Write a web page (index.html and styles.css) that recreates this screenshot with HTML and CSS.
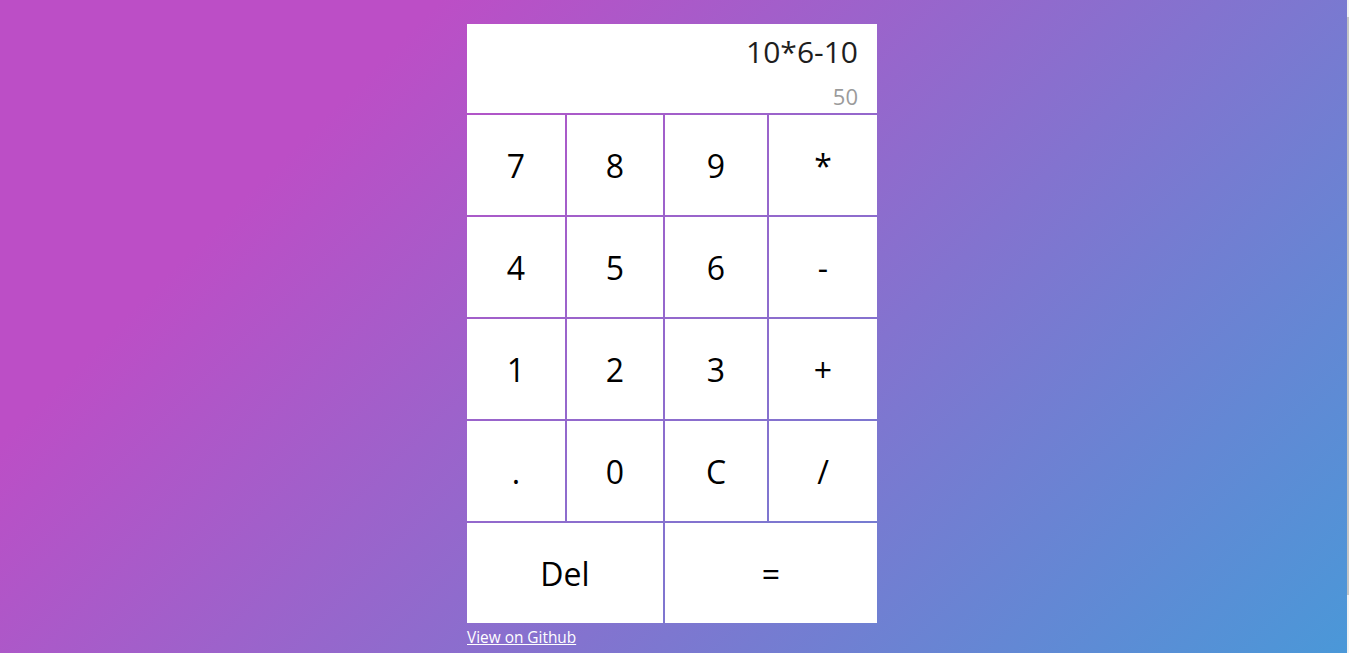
FILE: index.html
```html
<!DOCTYPE html>
<html lang="en">
<head>
<meta charset="utf-8">
<title>Calculator</title>
<link rel="stylesheet" href="styles.css">
</head>
<body>
<div class="page">
  <div class="calculator">
    <div class="output">
      <div class="previous-operand">10*6-10</div>
      <div class="current-operand">50</div>
    </div>
    <button class="key">7</button>
    <button class="key">8</button>
    <button class="key">9</button>
    <button class="key">*</button>
    <button class="key">4</button>
    <button class="key">5</button>
    <button class="key">6</button>
    <button class="key">-</button>
    <button class="key">1</button>
    <button class="key">2</button>
    <button class="key">3</button>
    <button class="key">+</button>
    <button class="key">.</button>
    <button class="key">0</button>
    <button class="key">C</button>
    <button class="key">/</button>
    <button class="key span-two">Del</button>
    <button class="key span-two">=</button>
  </div>
  <a class="github-link" href="#">View on Github</a>
</div>
<div class="scroll-track"><div class="scroll-thumb"></div></div>
</body>
</html>
```

FILE: styles.css
```css
html {
  min-height: 100%;
  background: linear-gradient(135deg, #bc4ec6 22%, #4a98d8 100%) fixed;
}

body {
  margin: 0;
  font-family: "Open Sans", "Noto Sans", sans-serif;
}

.page {
  display: flex;
  flex-direction: column;
  align-items: center;
  padding: 24px 5px 0 0;
}

.calculator {
  display: grid;
  grid-template-columns: 98px 96px 102px 108px;
  grid-template-rows: 89px repeat(5, 100px);
  gap: 2px;
  width: 410px;
}

.output {
  grid-column: 1 / -1;
  background: #fff;
  display: flex;
  flex-direction: column;
  align-items: flex-end;
  justify-content: space-between;
  padding: 7px 19px 3px 10px;
  word-break: break-all;
}

.previous-operand {
  color: #1e1e1e;
  font-size: 30px;
  line-height: 41px;
}

.current-operand {
  color: #9b9b9b;
  font-size: 22px;
  line-height: 28px;
}

.key {
  border: none;
  outline: none;
  background: #fff;
  color: #000;
  font-family: inherit;
  font-size: 32px;
  padding: 0;
  cursor: pointer;
}

.span-two {
  grid-column: span 2;
}

.github-link {
  width: 410px;
  color: #fff;
  font-size: 15.4px;
  line-height: 29px;
}

.scroll-track {
  position: fixed;
  top: 0;
  right: 0;
  width: 2px;
  height: 100%;
  background: #f1f1f1;
  display: flex;
  flex-direction: column;
  padding-top: 17px;
  box-sizing: border-box;
}

.scroll-thumb {
  height: 578px;
  background: #c6c6c6;
}
```
